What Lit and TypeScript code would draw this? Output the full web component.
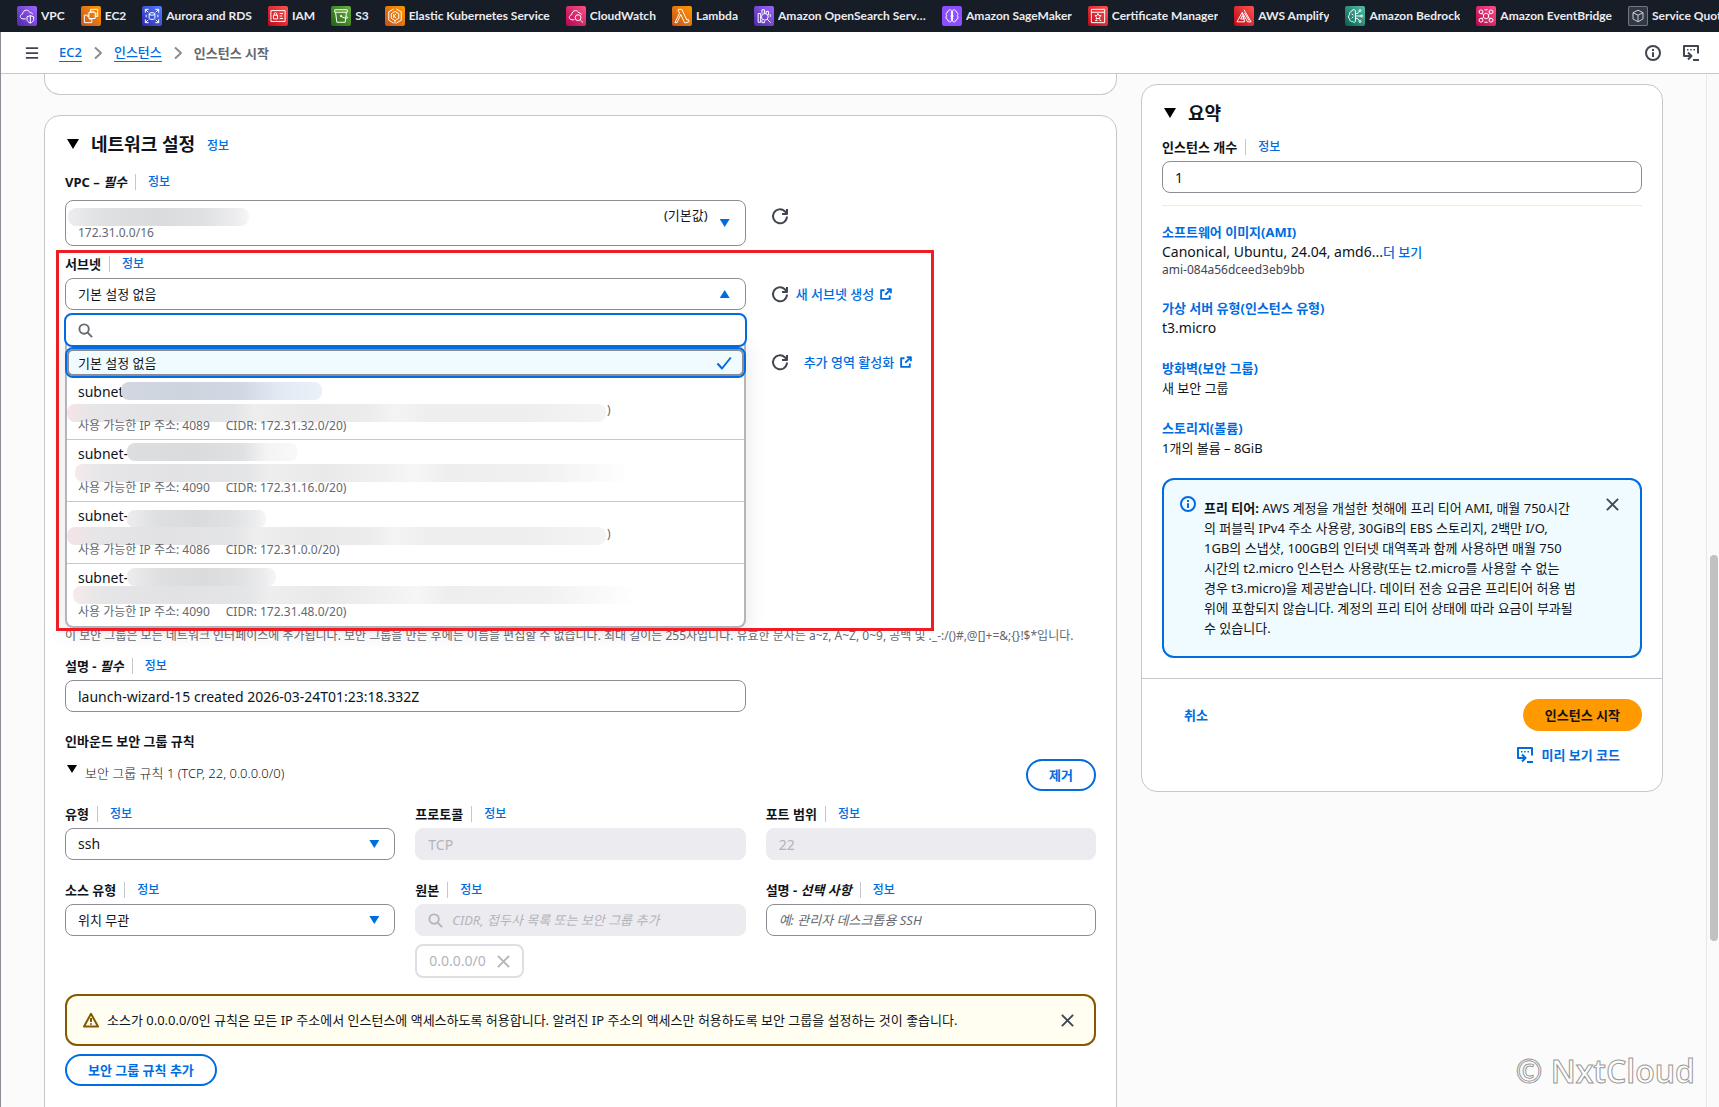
import { LitElement, html, svg, css, nothing } from "lit";
import type { TemplateResult, SVGTemplateResult } from "lit";
import { customElement, property } from "lit/decorators.js";
import { classMap } from "lit/directives/class-map.js";

interface Service {
  name: string;
  tone: string;
  glyph: SVGTemplateResult;
}

const services: Service[] = [
  {
    name: "VPC",
    tone: "purple",
    glyph: svg`<path d="M10.5 15.5H7.2C5.2 15.5 4 14.2 4 12.6c0-1.7 1.2-2.8 2.7-2.9C6.900 6.800 8.900 5 11.300 5c2 0 3.600 1.200 4.300 3 1.500-.3 2.900.6 3 2"/><path d="M16 11.500l4 1.500v3c0 2-1.600 3.500-4 4.500-2.400-1-4-2.500-4-4.500v-3z"/><path d="M16 11.500v9"/>`,
  },
  {
    name: "EC2",
    tone: "orange",
    glyph: svg`<rect x="9.500" y="7.500" width="7.500" height="7.500"/><path d="M11.500 7.500V4h8.500v8.500h-3M9.500 11H4v9h9v-5M12 5.500v2M14.500 5.500v2M17 9.500h2M17 12h2M7.500 12.500h2M11 15v2"/>`,
  },
  {
    name: "Aurora and RDS",
    tone: "blue",
    glyph: svg`<path d="M4 8V4h4M4 4l3.500 3.500M16 4h4v4M20 4l-3.500 3.500M20 16v4h-4M20 20l-3.500-3.500M8 20H4v-4M4 20l3.500-3.500"/><ellipse cx="12" cy="9.500" rx="3.500" ry="1.500"/><path d="M8.500 9.500v5c0 .9 1.500 1.600 3.500 1.600s3.500-.7 3.500-1.600v-5M5 10.500v3M19 10.500v3"/>`,
  },
  {
    name: "IAM",
    tone: "red",
    glyph: svg`<rect x="3.500" y="5.500" width="17" height="13"/><rect x="6.500" y="11" width="5" height="4.500"/><path d="M7.500 11V9.500a1.500 1.500 0 0 1 3 0V11M14 9h4M14 12h3M14 15h4"/>`,
  },
  {
    name: "S3",
    tone: "green",
    glyph: svg`<path d="M4.500 4.500h15v3h-15zM5.500 7.500L7 19.500h10l1.500-12M12 12.500c3 1.500 6.500 2.600 7.700 2 .8-.5-.6-1.800-1.700-2.500"/><circle cx="12" cy="12" r=".9"/>`,
  },
  {
    name: "Elastic Kubernetes Service",
    tone: "orange",
    glyph: svg`<path d="M10.500 3.500L4.500 7v10l6 3.500M13.500 3.500l6 3.500v10l-6 3.500"/><path d="M12 6.500l4.500 2.700v5.600L12 17.500l-4.500-2.700V9.200zM10.500 9.500v5M13.500 9.500l-3 2.500 3 2.500M12 17.500V21"/>`,
  },
  {
    name: "CloudWatch",
    tone: "pink",
    glyph: svg`<path d="M10 16.500H7.200C5.200 16.500 4 15.200 4 13.600c0-1.700 1.200-2.800 2.700-2.900C6.900 7.800 8.900 5.500 11.300 5.500c2 0 3.600 1.200 4.300 3 1.500-.3 2.900.6 3 2"/><circle cx="14.500" cy="14" r="3.500"/><path d="M17 16.500l3.500 3.500"/>`,
  },
  {
    name: "Lambda",
    tone: "orange",
    glyph: svg`<path d="M7.500 4h4.300l6 12.800 1.700-.6 1 2.500-4 1.500h-1.300l-4.700-10L6 20H3.500l5.600-11.700-.8-1.700H7.500z"/>`,
  },
  {
    name: "Amazon OpenSearch Service",
    tone: "violet",
    glyph: svg`<circle cx="13" cy="13" r="4"/><path d="M16 16l4 4M5 9v10.500h3V9zM9.500 9V4.500h3V9M14.500 9V6.500h3V11M19.500 13v-3M9.500 17v3h3v-2"/>`,
  },
  {
    name: "Amazon SageMaker",
    tone: "iris",
    glyph: svg`<path d="M11.300 5.500C9.500 3.500 7 5 7.200 7 5 7.500 4.500 10 5.500 11.500 4 13.500 5 16 7 16.500c0 2.500 2.800 3.500 4.300 1.700zM12.700 5.500c1.800-2 4.300-.5 4.100 1.500 2.200.5 2.700 3 1.700 4.500 1.500 2 .5 4.500-1.500 5 0 2.500-2.800 3.500-4.300 1.700z"/><circle cx="12" cy="12" r="1.200"/>`,
  },
  {
    name: "Certificate Manager",
    tone: "red",
    glyph: svg`<path d="M4 7.500V20h16V7.500M4 4h16v3.500H4zM8.500 17.500h3M14 17.500h2"/><path d="M12 9l1.100 2.300 2.500.3-1.800 1.800.4 2.500-2.200-1.200-2.200 1.200.4-2.500-1.800-1.800 2.500-.3z"/>`,
  },
  {
    name: "AWS Amplify",
    tone: "red",
    glyph: svg`<path d="M10 7.500L3.500 19h9.300zM12 4.500l2 3.500 6.500 11h-4.200L10.800 9.300M8 15.500l2-4 2 4zM12.500 8l5.500 9.500"/>`,
  },
  {
    name: "Amazon Bedrock",
    tone: "teal",
    glyph: svg`<path d="M12.500 5.500C11 3.500 8 4.500 8 6.500 5.500 7 5 9 5.500 10.500 3.500 12 4 14.500 5.500 15.500 5.500 18 7.500 19 9 18.500c1 1.500 3 1.500 3.500 0zM12.500 12H19M12.500 9H15l2-2.500M12.500 15H15l2 2.500M8 9.500l2 1.500M8 14.500l2-1.500"/><circle cx="18" cy="5.500" r="1.200"/><circle cx="20" cy="12" r="1.200"/><circle cx="18" cy="18.500" r="1.200"/>`,
  },
  {
    name: "Amazon EventBridge",
    tone: "pink",
    glyph: svg`<path d="M12 8.500l3 1.700v3.600l-3 1.700-3-1.700v-3.600zM9 10.200L6.500 8.500M15 10.200l2.500-1.700M9 13.800l-2.500 1.700M15 13.800l2.500 1.700"/><path d="M6 4.500l2.200 1.300v2.500L6 9.500 3.800 8.300V5.800zM18 4.500l2.200 1.300v2.500L18 9.500l-2.200-1.200V5.800zM6 14.500l2.200 1.300v2.500L6 19.500l-2.200-1.200v-2.500zM18 14.500l2.200 1.300v2.500L18 19.500l-2.200-1.200v-2.500z"/><path d="M10 4.500h4M10 19.500h4"/>`,
  },
  {
    name: "Service Quotas",
    tone: "gray",
    glyph: svg`<path d="M12 5l6 3v7.500l-6 3.500-6-3.500V8zM6 8l6 3 6-3M12 11v8"/>`,
  },
];

interface Subnet {
  id: string;
  ips: number;
  cidr: string;
  tail: boolean;
  name: string;
}

const subnets: Subnet[] = [
  { id: "subnet", ips: 4089, cidr: "172.31.32.0/20", tail: true, name: "s1" },
  { id: "subnet-", ips: 4090, cidr: "172.31.16.0/20", tail: false, name: "s2" },
  { id: "subnet-", ips: 4086, cidr: "172.31.0.0/20", tail: true, name: "s3" },
  { id: "subnet-", ips: 4090, cidr: "172.31.48.0/20", tail: false, name: "s4" },
];

const icons: Record<string, SVGTemplateResult> = {
  menu: svg`<path d="M1 2.500h14M1 8h14M1 13.500h14"/>`,
  chevron: svg`<path d="M5 2.500L11 8l-6 5.500"/>`,
  refresh: svg`<path d="M15 8.500A7 7 0 1 1 12.800 3.200L15 5.400"/><path d="M15 1v5h-5"/>`,
  external: svg`<path stroke-width="2.500" d="M6 3H1.500v11.500H13V10M9 1.500h5.500V7M14.500 1.500L7 9"/>`,
  search: svg`<circle cx="6.500" cy="6.500" r="5"/><path d="M10.300 10.300L15 15"/>`,
  check: svg`<path d="M1.500 8.500l4.500 5L14.800 2.500"/>`,
  close: svg`<path d="M2 2l12 12M14 2L2 14"/>`,
  info: svg`<circle cx="8" cy="8" r="7"/><path d="M8 7.200V12M8 4v2"/>`,
  shell: svg`<path d="M15 8.500V1H1v10h7"/><path d="M5 7.500L8.500 11 5 14.500M10 15h6"/><path stroke-width="1.500" d="M4 4.700h1.500M7.200 4.700h1.500M10.500 4.700H12"/>`,
  warning: svg`<path d="M8 1.800L15 14.500H1z"/><path d="M8 6v4M8 11.200v1.600"/>`,
};

@customElement("line-icon")
export class LineIcon extends LitElement {
  @property() name = "info";

  static styles = css`
    :host { display: inline-flex; flex: none; width: 16px; height: 16px; }
    svg {
      display: block;
      width: 100%;
      height: 100%;
      overflow: visible;
      fill: none;
      stroke: currentColor;
      stroke-width: 2;
      stroke-linejoin: round;
    }
  `;

  render() {
    return html`<svg viewBox="0 0 16 16" aria-hidden="true">${icons[this.name]}</svg>`;
  }
}

@customElement("service-bar")
export class ServiceBar extends LitElement {
  static styles = css`
    :host { display: block; background: #161d26; }
    .bar {
      display: flex;
      align-items: center;
      gap: 16px;
      height: 32px;
      padding-left: 17px;
      overflow: hidden;
    }
    a {
      display: flex;
      flex: none;
      align-items: center;
      gap: 4px;
      font: 700 12px/16px Lato, sans-serif;
      color: #ebebf0;
      text-decoration: none;
      white-space: nowrap;
    }
    .name { max-width: 148px; overflow: hidden; text-overflow: ellipsis; }
    .tile { display: block; width: 20px; height: 20px; border-radius: 2px; }
    svg {
      display: block;
      fill: none;
      stroke: #fff;
      stroke-width: 1.2;
      stroke-linejoin: round;
    }
    .purple, .violet { background: linear-gradient(45deg, #4d27aa, #a166ff); }
    .orange { background: linear-gradient(45deg, #c8511b, #ff9900); }
    .blue { background: linear-gradient(45deg, #2e27ad, #527fff); }
    .red { background: linear-gradient(45deg, #bd0816, #ff5252); }
    .green { background: linear-gradient(45deg, #1b660f, #6cae3e); }
    .pink { background: linear-gradient(45deg, #b0084d, #ff4f8b); }
    .iris { background: #8c4fff; }
    .teal { background: linear-gradient(45deg, #055f4e, #56c0a7); }
    .gray { background: #37414d; box-shadow: inset 0 0 0 1px #8c8c94; opacity: 0.8; }
  `;

  render() {
    return html`<nav class="bar">
      ${services.map(
        (s) => html`<a href="#">
          <span class=${classMap({ tile: true, [s.tone]: true })}>
            <svg viewBox="0 0 24 24" width="20" height="20" aria-hidden="true">${s.glyph}</svg>
          </span>
          <span class="name">${s.name}</span>
        </a>`,
      )}
    </nav>`;
  }
}

const shared = css`
  * { box-sizing: border-box; }
  a { color: #006ce0; text-decoration: none; }
  button { font: inherit; cursor: pointer; }
  .label { display: flex; align-items: center; height: 20px; font-weight: 700; white-space: nowrap; }
  .label a {
    margin-left: 8px;
    padding-left: 12px;
    border-left: 1px solid #c6c6cd;
    font-size: 12px;
    line-height: 16px;
    font-weight: 500;
  }
  .card { background: #fff; border: 1px solid #c6c6cd; border-radius: 16px; }
  .card-title {
    display: flex;
    align-items: center;
    gap: 12px;
    margin: 0;
    font-size: 18px;
    line-height: 24px;
    font-weight: 700;
  }
  .card-title a { font-size: 12px; font-weight: 500; line-height: 16px; padding-top: 4px; }
  .fold { flex: none; width: 12px; height: 10px; margin: 0 0 0 2px; padding: 0; border: 0; background: currentColor; clip-path: polygon(0 0, 100% 0, 50% 100%); }
  .control {
    display: block;
    width: 100%;
    height: 32px;
    padding: 0 12px;
    border: 1px solid #8c8c94;
    border-radius: 8px;
    background: #fff;
    color: #0f141a;
    font: inherit;
    text-align: left;
  }
  .latin { font-size: 14px; }
  .icon-button {
    display: inline-flex;
    padding: 0;
    border: 0;
    background: none;
    color: #424650;
  }
`;

const label = (text: string, target: string, note = ""): TemplateResult => html`<div class="label">
  <label for=${target}>${text}${note ? html`<i>${note}</i>` : nothing}</label><a href="#">정보</a>
</div>`;

@customElement("network-card")
export class NetworkCard extends LitElement {
  static styles = [
    shared,
    css`
      :host { display: block; }
      .card { padding: 16px 20px 36px; }
      .card-title { margin-bottom: 16px; }
      .row { display: grid; grid-template-columns: repeat(3, minmax(0, 1fr)); column-gap: 20px; }
      .wide { grid-column: span 2; }
      .field { position: relative; display: flex; flex-direction: column; }
      .actions { display: flex; align-items: center; align-self: start; height: 32px; padding-left: 6px; }
      .actions a { display: inline-flex; align-items: center; gap: 6px; margin-left: 8px; font-weight: 500; white-space: nowrap; }
      .actions .far { margin-left: 16px; }
      .actions a line-icon { width: 12px; height: 12px; }
      .gap-4 { margin-top: 4px; }
      .gap-8 { margin-top: 8px; }
      .beside-vpc { margin-top: 28px; }
      .beside-subnet { margin-top: 24px; }
      .picker { display: flex; align-items: center; justify-content: space-between; gap: 12px; padding-right: 15px; }
      .caret { flex: none; width: 10px; height: 8px; background: #006ce0; clip-path: polygon(0 0, 100% 0, 50% 100%); }
      .caret.up { clip-path: polygon(50% 0, 100% 100%, 0 100%); }
      .vpc { height: 46px; }
      .vpc-text { flex: 1; display: flex; flex-direction: column; }
      .vpc-top { display: flex; justify-content: flex-end; line-height: 20px; }
      .vpc-range { font-size: 12px; line-height: 16px; color: #656871; }

      .zone { margin-top: 36px; min-height: 32px; }
      .hint { margin: 250px 0 12px; font-size: 12px; line-height: 16px; color: #656871; }

      .smudge { position: absolute; height: 18px; border-radius: 8px; pointer-events: none; }
      .smudge.id, .smudge.title {
        background: linear-gradient(90deg, #ededef, #dfe0e2 20%, #dadbdd 50%, #e0e1e2 75%, #ececee 92%, #f6f6f7);
      }
      .smudge.title { left: 3px; top: 36px; width: 181px; }
      .smudge.detail {
        background: linear-gradient(90deg, #f5e4e6, #e6e6e8 5%, #e2e2e4 18%, #e4e5e6 31%, #eeeeef 35%, #e9e9ea 45%, #ececed 56%, #f4f4f5 61%, #eeeeef 67%, #eeeeef 84%, #f4f4f5);
      }
      .s1 .smudge.id { left: 54px; top: 4px; width: 201px; background: linear-gradient(90deg, #d3d8e0, #cdd4dd 30%, #d1d8e3 60%, #e2e9f3 78%, #ebf1f8); }
      .s1 .smudge.detail, .s3 .smudge.detail { left: 0; width: 539px; }
      .s1 .smudge.detail { top: 26px; }
      .s2 .smudge.id { left: 60px; top: 3px; width: 171px; background: linear-gradient(90deg, #dddee0, #dadbdd 40%, #e0e1e2 68%, #f4f4f5 82%, #f9f9f9); }
      .s2 .smudge.detail { left: 8px; top: 24px; width: 556px; }
      .s3 .smudge.id { left: 60px; top: 8px; width: 139px; }
      .s3 .smudge.detail { top: 25px; }
      .s4 .smudge.id { left: 60px; top: 4px; width: 149px; }
      .s4 .smudge.detail { left: 6px; top: 22px; width: 562px; }
      .s2 .smudge.detail, .s4 .smudge.detail {
        background: linear-gradient(90deg, #f5eaec, #e6e6e8 5%, #e2e2e4 18%, #e4e5e6 31%, #eeeeef 35%, #e9e9ea 45%, #f1f1f2 56%, #f6f6f7 61%, #eeeeef 67%, #f1f1f2 84%, #fff);
      }

      .dropdown { position: absolute; z-index: 2; top: 59px; left: -1px; right: -1px; }
      .filter { position: relative; display: flex; align-items: center; height: 34px; padding-left: 12px; background: #fff; border: 2px solid #006ce0; border-radius: 8px; color: #656871; }
      .filter input { flex: 1; min-width: 0; height: 28px; border: 0; outline: 0; background: none; font: inherit; }
      .filter line-icon { width: 15px; height: 15px; }
      .options {
        margin: -4px 1px 0;
        padding: 4px 0 0;
        list-style: none;
        background: #fff;
        border: 2px solid #b4b4bb;
        border-top: 0;
        border-radius: 0 0 8px 8px;
        box-shadow: 0 4px 20px 1px rgba(0, 7, 22, 0.1);
      }
      .selected {
        display: flex;
        align-items: center;
        justify-content: space-between;
        height: 31px;
        margin: 0 -2px;
        padding: 0 12px 0 11px;
        border: 2px solid #006ce0;
        border-radius: 8px;
        box-shadow: inset 0 0 0 2px #8c8c94;
        background: #f0fbff;
      }
      .selected line-icon { color: #006ce0; }
      .option { position: relative; height: 62px; padding: 4px 11px 0; border-bottom: 1px solid #c6c6cd; font-size: 14px; line-height: 20px; }
      .option:last-child { border-bottom: 0; }
      .sub { position: relative; z-index: 1; display: flex; gap: 16px; font-size: 12px; line-height: 16px; color: #656871; }
      .detail-line { height: 16px; padding-left: 529px; }
      .sub span { white-space: nowrap; }

      .highlight { position: absolute; z-index: 3; pointer-events: none; top: -4px; left: -9px; right: -188px; height: 381px; border: 3px solid #ee1c25; }

      .section { margin: 19px 0 8px; font-size: 13px; line-height: 20px; font-weight: 700; }
      .rule-head { display: flex; justify-content: space-between; align-items: flex-start; margin-bottom: 13px; }
      .rule-name { display: flex; gap: 8px; padding-top: 4px; line-height: 20px; font-weight: 300; }
      .rule-name .fold { width: 10px; height: 8px; margin-top: 2px; }
      .pill { height: 32px; padding: 0 21px; border: 2px solid #006ce0; border-radius: 20px; background: #fff; color: #006ce0; font-weight: 700; white-space: nowrap; }
      .rule-row { margin-bottom: 20px; }
      .select-wrap { display: grid; align-items: center; margin-top: 4px; }
      .select-wrap > * { grid-area: 1 / 1; }
      .select-wrap select { appearance: none; }
      .select-wrap .caret { justify-self: end; margin-right: 16px; pointer-events: none; }
      .control:disabled, .ghost { border-color: #ebebf0; background: #ebebf0; color: #b4b4bb; }
      .control::placeholder { font-style: italic; color: #656871; opacity: 1; }
      .ghost { display: flex; align-items: center; gap: 9px; }
      .ghost line-icon { width: 15px; height: 15px; }
      .ghost input { flex: 1; min-width: 0; padding: 0; border: 0; background: none; font: inherit; color: #b4b4bb; }
      .ghost input::placeholder { font-style: italic; color: #b4b4bb; opacity: 1; }
      .token { display: flex; align-items: center; gap: 10px; align-self: flex-start; height: 34px; margin-top: 8px; padding: 0 11px 0 12px; border: 2px solid #dedee3; border-radius: 8px; color: #b4b4bb; font-size: 14px; }
      .token .icon-button { color: #b4b4bb; }
      .token line-icon, .alert .icon-button line-icon { width: 15px; height: 15px; }
      .last { margin-bottom: 16px; }
      .alert { display: flex; align-items: center; gap: 8px; min-height: 52px; margin-bottom: 8px; padding: 0 19px 0 16px; border: 2px solid #855900; border-radius: 12px; background: #fffef0; }
      .alert > line-icon { color: #855900; }
      .alert p { flex: 1; margin: 0; line-height: 20px; }
    `,
  ];

  private option(s: Subnet) {
    return html`<li class="option ${s.name}" role="option" aria-selected="false">
      <div>${s.id}</div>
      <div class="sub detail-line">${s.tail ? html`<span>)</span>` : nothing}</div>
      <div class="sub"><span>사용 가능한 IP 주소: ${s.ips}</span><span>CIDR: ${s.cidr})</span></div>
      <span class="smudge id"></span>
      <span class="smudge detail"></span>
    </li>`;
  }

  render() {
    return html`<section class="card">
      <h2 class="card-title">
        <button class="fold" aria-label="네트워크 설정"></button>네트워크 설정 <a href="#">정보</a>
      </h2>

      <div class="row">
        <div class="field wide">
          ${label("VPC – ", "vpc", "필수")}
          <button id="vpc" class="control picker vpc gap-8" aria-haspopup="listbox">
            <span class="vpc-text">
              <span class="vpc-top">(기본값)</span>
              <span class="vpc-range">172.31.0.0/16</span>
            </span>
            <span class="caret"></span>
          </button>
          <span class="smudge title"></span>
        </div>
        <div class="actions beside-vpc">
          <button class="icon-button" aria-label="VPC"><line-icon name="refresh"></line-icon></button>
        </div>
      </div>

      <div class="row gap-8">
        <div class="field wide">
          ${label("서브넷", "subnet")}
          <button id="subnet" class="control picker gap-4" aria-haspopup="listbox" aria-expanded="true">
            <span>기본 설정 없음</span><span class="caret up"></span>
          </button>
          <div class="dropdown">
            <div class="filter">
              <line-icon name="search"></line-icon><input type="text" aria-label="서브넷" />
            </div>
            <ul class="options" role="listbox">
              <li class="selected" role="option" aria-selected="true">
                <span>기본 설정 없음</span><line-icon name="check"></line-icon>
              </li>
              ${subnets.map((s) => this.option(s))}
            </ul>
          </div>
          <div class="highlight"></div>
        </div>
        <div class="actions beside-subnet">
          <button class="icon-button" aria-label="서브넷"><line-icon name="refresh"></line-icon></button>
          <a href="#">새 서브넷 생성<line-icon name="external"></line-icon></a>
        </div>
      </div>

      <div class="row zone">
        <div class="wide"></div>
        <div class="actions">
          <button class="icon-button" aria-label="영역"><line-icon name="refresh"></line-icon></button>
          <a class="far" href="#">추가 영역 활성화<line-icon name="external"></line-icon></a>
        </div>
      </div>

      <p class="hint">이 보안 그룹은 모든 네트워크 인터페이스에 추가됩니다. 보안 그룹을 만든 후에는 이름을 편집할 수 없습니다. 최대 길이는 255자입니다. 유효한 문자는 a~z, A~Z, 0~9, 공백 및 ._-:/()#,@[]+=&amp;;{}!$*입니다.</p>

      <div class="row">
        <div class="field wide">
          ${label("설명 - ", "group-description", "필수")}
          <input id="group-description" class="control latin gap-4" type="text" .value=${"launch-wizard-15 created 2026-03-24T01:23:18.332Z"} />
        </div>
      </div>

      <h3 class="section">인바운드 보안 그룹 규칙</h3>
      <div class="rule-head">
        <div class="rule-name">
          <button class="fold" aria-label="보안 그룹 규칙 1"></button>
          <span>보안 그룹 규칙 1 (TCP, 22, 0.0.0.0/0)</span>
        </div>
        <button class="pill">제거</button>
      </div>

      <div class="row rule-row">
        <div class="field">
          ${label("유형", "type")}
          <div class="select-wrap">
            <select id="type" class="control latin"><option>ssh</option></select><span class="caret"></span>
          </div>
        </div>
        <div class="field">
          ${label("프로토콜", "protocol")}
          <input id="protocol" class="control latin gap-4" .value=${"TCP"} disabled />
        </div>
        <div class="field">
          ${label("포트 범위", "port")}
          <input id="port" class="control latin gap-4" .value=${"22"} disabled />
        </div>
      </div>

      <div class="row last">
        <div class="field">
          ${label("소스 유형", "source-type")}
          <div class="select-wrap">
            <select id="source-type" class="control"><option>위치 무관</option></select><span class="caret"></span>
          </div>
        </div>
        <div class="field">
          ${label("원본", "source")}
          <div class="control ghost gap-4">
            <line-icon name="search"></line-icon>
            <input id="source" type="text" placeholder="CIDR, 접두사 목록 또는 보안 그룹 추가" disabled />
          </div>
          <span class="token">0.0.0.0/0<button class="icon-button" aria-label="0.0.0.0/0" disabled><line-icon name="close"></line-icon></button></span>
        </div>
        <div class="field">
          ${label("설명 - ", "rule-description", "선택 사항")}
          <input id="rule-description" class="control gap-4" type="text" placeholder="예: 관리자 데스크톱용 SSH" />
        </div>
      </div>

      <div class="alert" role="status">
        <line-icon name="warning"></line-icon>
        <p>소스가 0.0.0.0/0인 규칙은 모든 IP 주소에서 인스턴스에 액세스하도록 허용합니다. 알려진 IP 주소의 액세스만 허용하도록 보안 그룹을 설정하는 것이 좋습니다.</p>
        <button class="icon-button" aria-label="닫기"><line-icon name="close"></line-icon></button>
      </div>
      <button class="pill">보안 그룹 규칙 추가</button>
    </section>`;
  }
}

@customElement("summary-card")
export class SummaryCard extends LitElement {
  static styles = [
    shared,
    css`
      :host { display: block; }
      .body { padding: 16px 20px 20px; }
      .card-title { margin-bottom: 12px; }
      .gap-4 { margin-top: 4px; }
      hr { height: 1px; margin: 12px 0 16px; border: 0; background: #ebebf0; }
      dl { margin: 0; line-height: 20px; }
      dt { font-weight: 700; }
      dd { margin: 0 0 20px; }
      dd .small { display: block; font-size: 12px; line-height: 16px; color: #424650; }
      dd a { font-weight: 500; font-size: 13px; }
      .free { display: flex; align-items: flex-start; gap: 8px; padding: 16px 20px 18px 16px; border: 2px solid #006ce0; border-radius: 12px; background: #f0fbff; }
      .free > line-icon { color: #006ce0; }
      .free p { flex: 1; margin: 2px 0 0; line-height: 20px; white-space: nowrap; }
      .free .icon-button { padding-top: 1px; }
      .free .icon-button line-icon { width: 15px; height: 15px; }
      footer { display: flex; flex-direction: column; gap: 14px; padding: 20px 20px 26px; border-top: 1px solid #c6c6cd; }
      .line { display: flex; align-items: center; justify-content: space-between; height: 32px; padding-left: 22px; }
      .text-button { padding: 0; border: 0; background: none; color: #006ce0; font-weight: 700; line-height: 20px; }
      .launch { height: 32px; padding: 0 22px; border: 0; border-radius: 20px; background: #ff9900; color: #0f141a; font-weight: 700; }
      .preview { display: inline-flex; align-items: center; gap: 8px; margin-left: auto; padding-right: 22px; }
    `,
  ];

  render() {
    return html`<aside class="card">
      <div class="body">
        <h2 class="card-title"><button class="fold" aria-label="요약"></button>요약</h2>
        ${label("인스턴스 개수", "count")}
        <input id="count" class="control latin gap-4" type="text" inputmode="numeric" .value=${"1"} />
        <hr />
        <dl>
          <dt><a href="#">소프트웨어 이미지(AMI)</a></dt>
          <dd><span class="latin">Canonical, Ubuntu, 24.04, amd6...</span><a href="#">더 보기</a><span class="small">ami-084a56dceed3eb9bb</span></dd>
          <dt><a href="#">가상 서버 유형(인스턴스 유형)</a></dt>
          <dd class="latin">t3.micro</dd>
          <dt><a href="#">방화벽(보안 그룹)</a></dt>
          <dd>새 보안 그룹</dd>
          <dt><a href="#">스토리지(볼륨)</a></dt>
          <dd>1개의 볼륨 – 8GiB</dd>
        </dl>
        <div class="free">
          <line-icon name="info"></line-icon>
          <p><b>프리 티어:</b> AWS 계정을 개설한 첫해에 프리 티어 AMI, 매월 750시간<br />의 퍼블릭 IPv4 주소 사용량, 30GiB의 EBS 스토리지, 2백만 I/O,<br />1GB의 스냅샷, 100GB의 인터넷 대역폭과 함께 사용하면 매월 750<br />시간의 t2.micro 인스턴스 사용량(또는 t2.micro를 사용할 수 없는<br />경우 t3.micro)을 제공받습니다. 데이터 전송 요금은 프리티어 허용 범<br />위에 포함되지 않습니다. 계정의 프리 티어 상태에 따라 요금이 부과될<br />수 있습니다.</p>
          <button class="icon-button" aria-label="닫기"><line-icon name="close"></line-icon></button>
        </div>
      </div>
      <footer>
        <div class="line">
          <button class="text-button">취소</button>
          <button class="launch">인스턴스 시작</button>
        </div>
        <button class="text-button preview"><line-icon name="shell"></line-icon>미리 보기 코드</button>
      </footer>
    </aside>`;
  }
}

@customElement("app-root")
export class AppRoot extends LitElement {
  static styles = css`
    * { box-sizing: border-box; }
    :host {
      position: relative;
      display: flex;
      flex-direction: column;
      height: 100vh;
      overflow: hidden;
      background: #fbfbfb;
      color: #0f141a;
      font: 13px/20px "Noto Sans", "Noto Sans CJK KR", sans-serif;
    }
    .crumbs {
      display: flex;
      flex: none;
      align-items: center;
      justify-content: space-between;
      height: 42px;
      padding: 0 20px 0 25px;
      background: #fff;
      border-bottom: 1px solid #c6c6cd;
      color: #424650;
    }
    .trail, .tools { display: flex; align-items: center; }
    .trail { gap: 8px; font-weight: 500; }
    .tools { gap: 22px; }
    .trail line-icon { color: #8c8c94; }
    .trail .current { color: #656871; font-weight: 700; }
    a { color: #006ce0; text-decoration: none; border-bottom: 1px solid; line-height: 18px; }
    button { display: inline-flex; padding: 0; border: 0; background: none; color: inherit; }
    .trail button { margin-right: 12px; }
    .trail button line-icon { width: 14px; height: 14px; color: #424650; }
    main {
      flex: 1;
      min-height: 0;
      display: grid;
      grid-template-columns: minmax(0, 37fr) minmax(0, 18fr);
      gap: 24px;
      align-items: start;
      padding: 0 56px 0 44px;
      overflow: hidden;
    }
    .column { display: flex; flex-direction: column; gap: 20px; }
    .previous { height: 21px; background: #fff; border: 1px solid #c6c6cd; border-top: 0; border-radius: 0 0 16px 16px; }
    summary-card { margin-top: 10px; }
    .edge { position: absolute; left: 0; top: 32px; bottom: 0; width: 1px; background: #8c8c94; }
    .track { position: absolute; right: 0; top: 74px; bottom: 0; width: 13px; background: #fafafa; border-left: 1px solid #e8e8e8; }
    .thumb { position: absolute; left: 3px; top: 481px; width: 8px; height: 386px; border-radius: 4px; background: #c1c1c1; }
    .mark {
      position: absolute;
      right: 24px;
      bottom: 12px;
      font: 600 32px/48px "Open Sans", sans-serif;
      color: #fff;
      -webkit-text-stroke: 1px #999;
    }
  `;

  render() {
    return html`
      <service-bar></service-bar>
      <header class="crumbs">
        <nav class="trail">
          <button aria-label="메뉴"><line-icon name="menu"></line-icon></button>
          <a href="#">EC2</a>
          <line-icon name="chevron"></line-icon>
          <a href="#">인스턴스</a>
          <line-icon name="chevron"></line-icon>
          <span class="current">인스턴스 시작</span>
        </nav>
        <div class="tools">
          <button aria-label="정보"><line-icon name="info"></line-icon></button>
          <button aria-label="CloudShell"><line-icon name="shell"></line-icon></button>
        </div>
      </header>
      <main>
        <div class="column">
          <div class="previous"></div>
          <network-card></network-card>
        </div>
        <summary-card></summary-card>
      </main>
      <div class="edge"></div>
      <div class="track"><div class="thumb"></div></div>
      <div class="mark">© NxtCloud</div>
    `;
  }
}
